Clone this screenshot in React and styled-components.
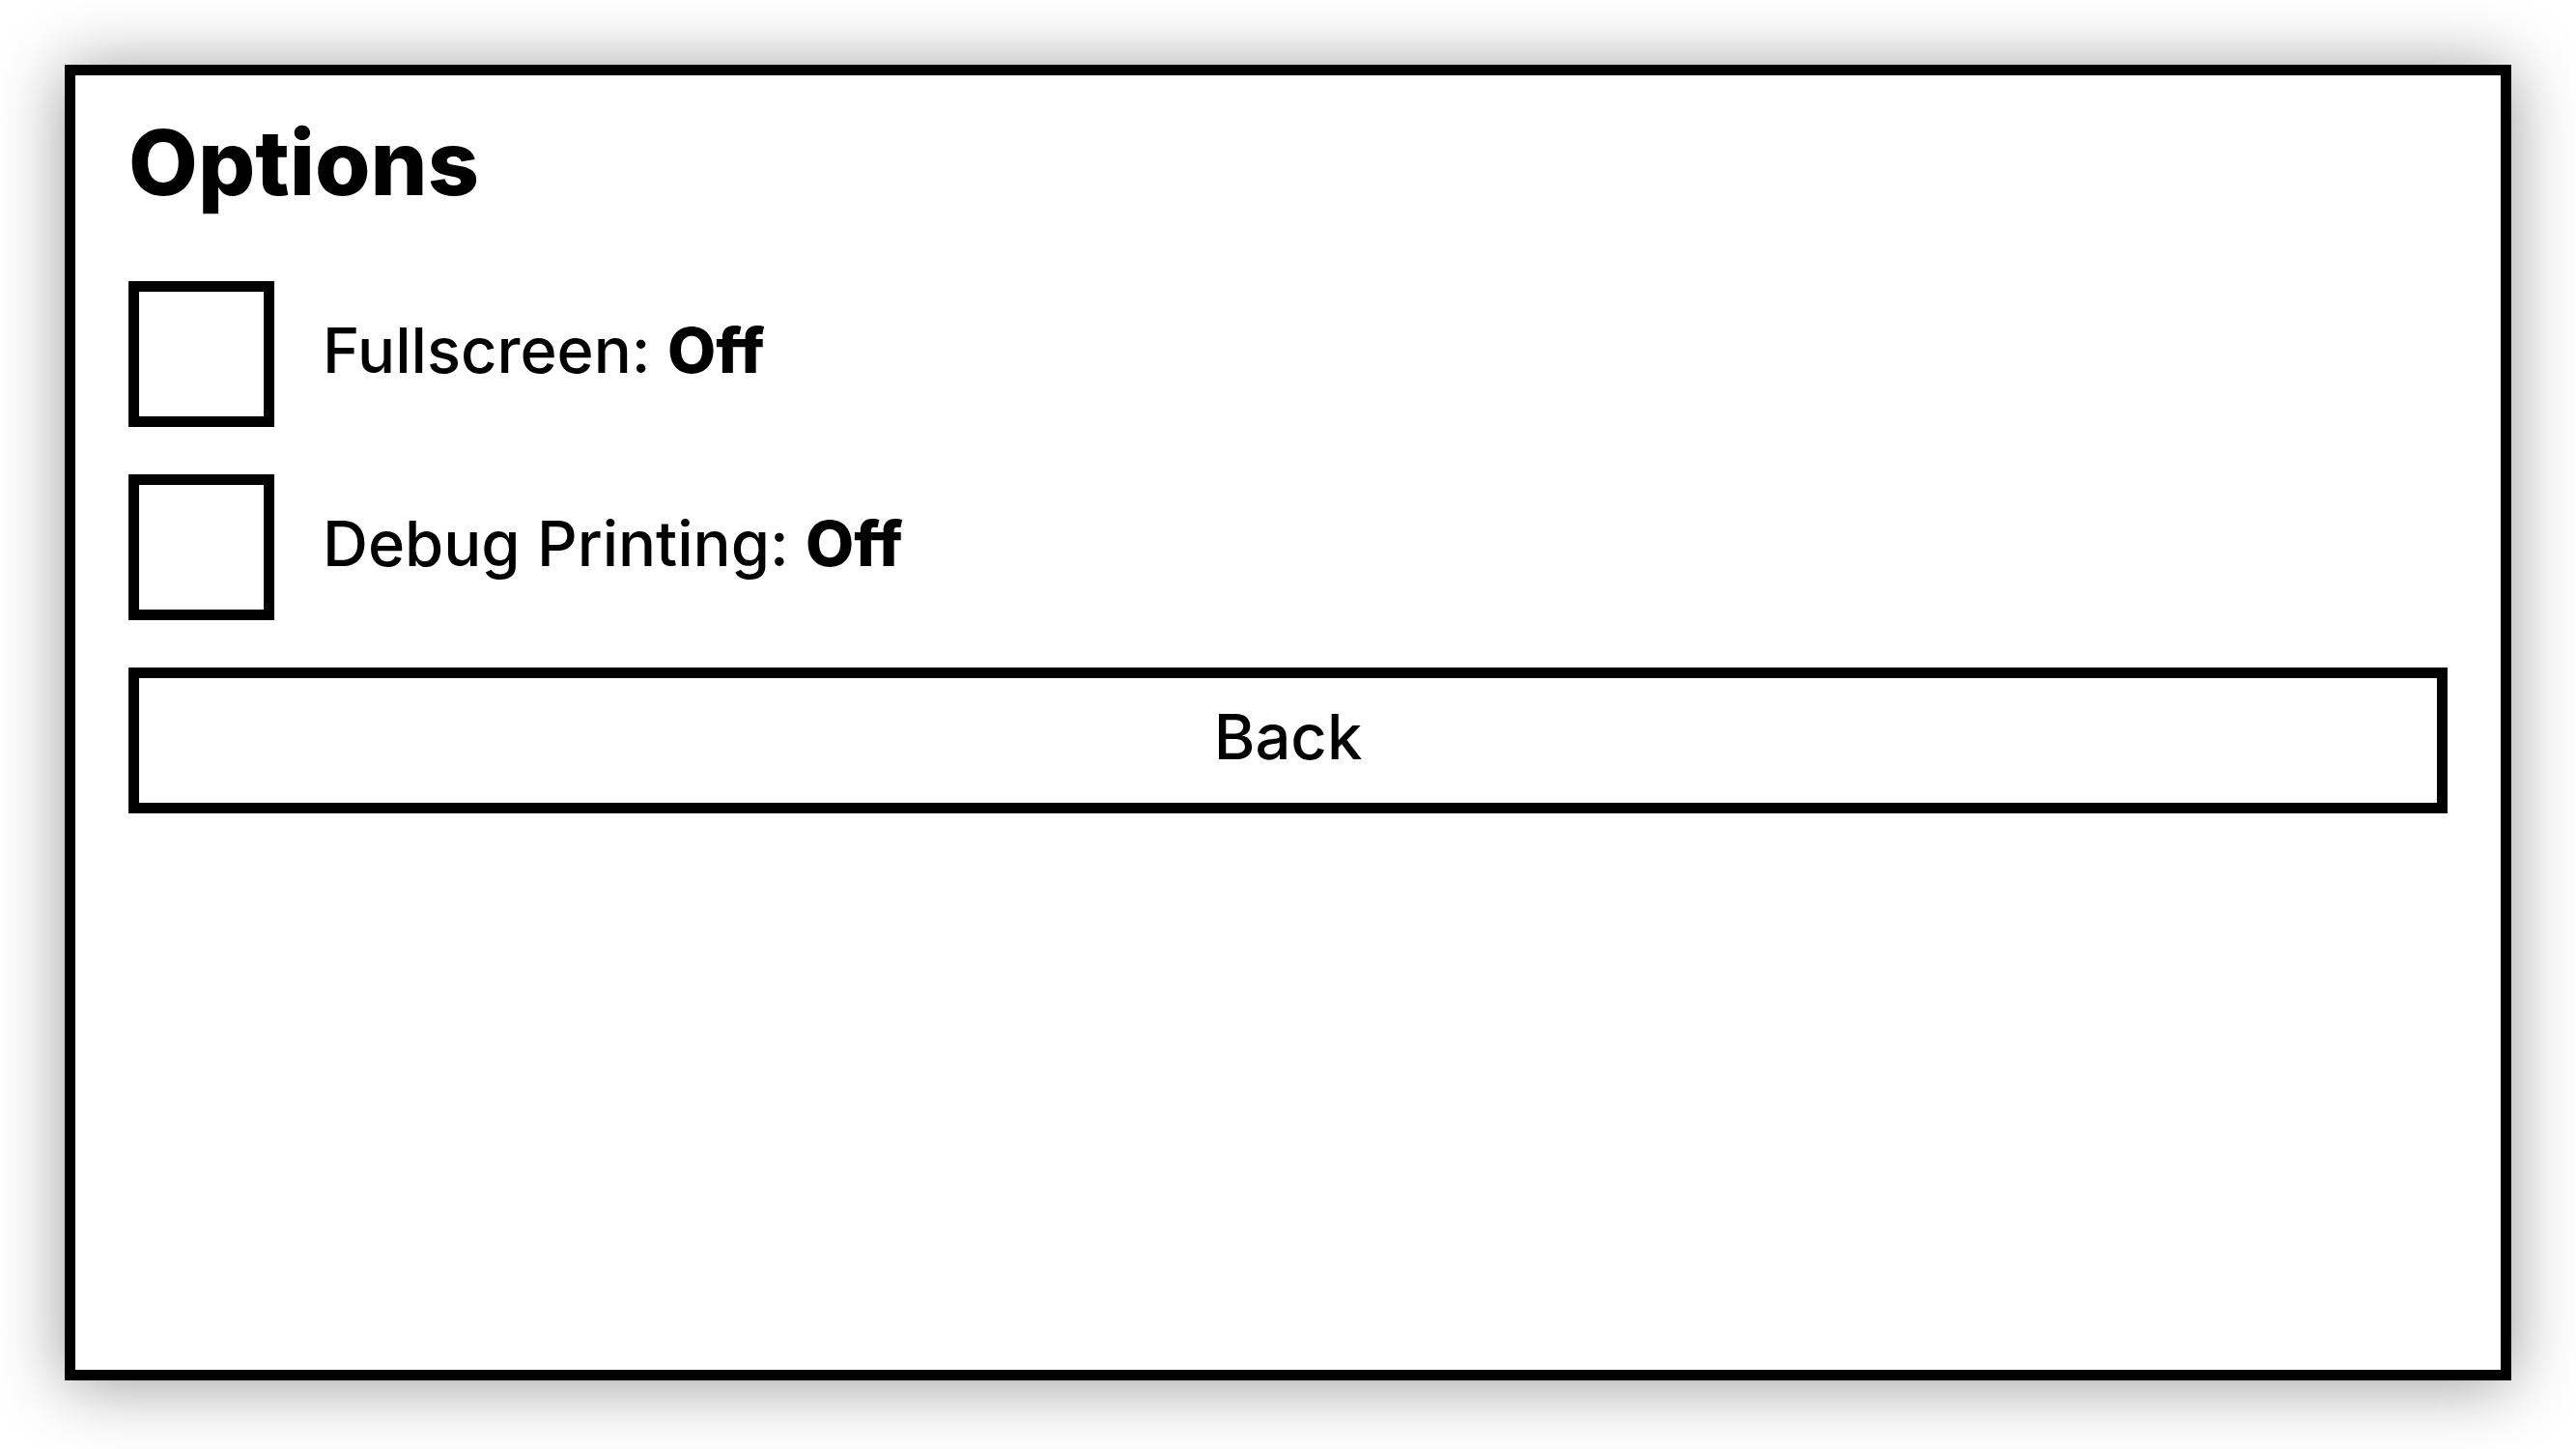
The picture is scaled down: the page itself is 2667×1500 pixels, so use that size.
import React, { useState } from "react";
import styled, { createGlobalStyle } from "styled-components";

const GlobalStyle = createGlobalStyle`
  *, *::before, *::after { box-sizing: border-box; }
  body {
    margin: 0;
    background: #fff;
    color: #000;
    font-family: Inter, "Liberation Sans", sans-serif;
    font-size: 65px;
    font-weight: 500;
    line-height: 74px;
  }
`;

const Screen = styled.div`
  display: flex;
  min-height: 100vh;
  padding: 67px 67px 71px;
`;

const Panel = styled.main`
  flex: 1;
  display: flex;
  flex-direction: column;
  gap: 49px;
  padding: 40px 55px;
  border: 11px solid #000;
  background: #fff;
  box-shadow: 0 4px 67px rgba(0, 0, 0, 0.4);
`;

const Title = styled.h1`
  margin: 0;
  font-size: 93px;
  font-weight: 800;
  line-height: 100px;
  padding-bottom: 24px;
`;

const Option = styled.label`
  display: flex;
  align-items: center;
  gap: 50px;
  cursor: pointer;
`;

const Toggle = styled.input`
  appearance: none;
  flex: none;
  width: 151px;
  height: 151px;
  margin: 0;
  border: 11px solid #000;
  background: #fff;
  cursor: pointer;

  &:checked {
    background: #000;
    box-shadow: inset 0 0 0 20px #fff;
  }
`;

const Caption = styled.span`
  padding-bottom: 8px;
`;

const Value = styled.strong`
  font-weight: 800;
`;

const Button = styled.button`
  height: 151px;
  padding: 0 0 8px;
  border: 11px solid #000;
  background: #fff;
  color: inherit;
  font: inherit;
  cursor: pointer;
`;

function ToggleOption({ name }) {
  const [on, setOn] = useState(false);
  return (
    <Option>
      <Toggle type="checkbox" checked={on} onChange={(e) => setOn(e.target.checked)} />
      <Caption>
        {name}: <Value>{on ? "On" : "Off"}</Value>
      </Caption>
    </Option>
  );
}

export default function App() {
  return (
    <>
      <GlobalStyle />
      <Screen>
        <Panel>
          <Title>Options</Title>
          <ToggleOption name="Fullscreen" />
          <ToggleOption name="Debug Printing" />
          <Button type="button">Back</Button>
        </Panel>
      </Screen>
    </>
  );
}
